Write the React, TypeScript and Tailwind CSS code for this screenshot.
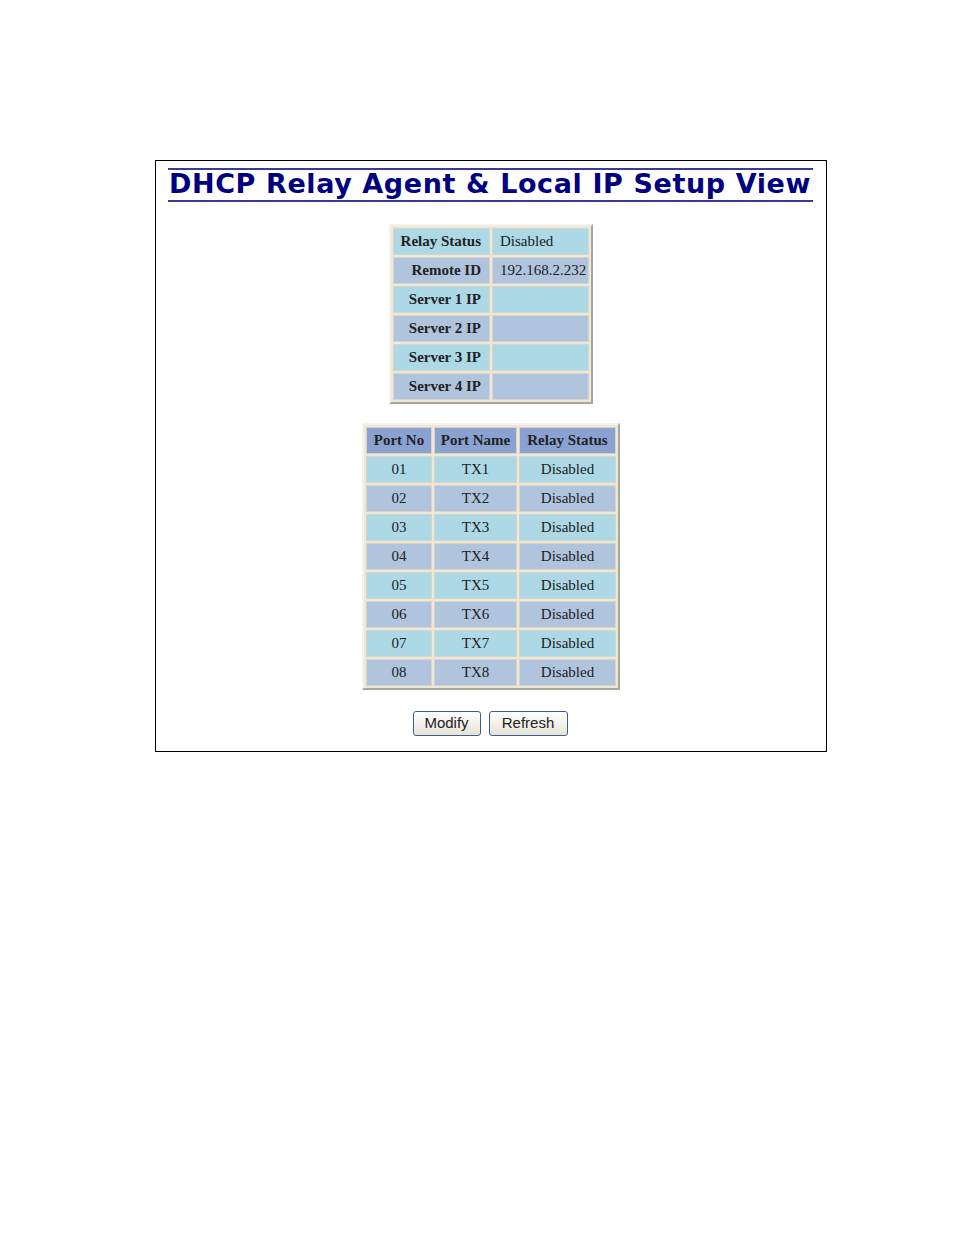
const relayRows = [
  { label: 'Relay Status', value: 'Disabled' },
  { label: 'Remote ID', value: '192.168.2.232' },
  { label: 'Server 1 IP', value: '' },
  { label: 'Server 2 IP', value: '' },
  { label: 'Server 3 IP', value: '' },
  { label: 'Server 4 IP', value: '' },
];

const ports = ['01', '02', '03', '04', '05', '06', '07', '08'];

const rowBg = (i: number) => (i % 2 === 0 ? 'bg-[#add8e6]' : 'bg-[#b0c4de]');

function Btn({ children, w }: { children: React.ReactNode; w: string }) {
  return (
    <button
      type="button"
      className={`${w} h-[25px] rounded-[3px] border border-[#3c5f8a] bg-gradient-to-b from-white to-[#e6e3d6] font-['Liberation_Sans',sans-serif] text-[15px] text-[#222]`}
    >
      {children}
    </button>
  );
}

export default function App() {
  return (
    <div className="min-h-[1235px] w-[954px] bg-white pt-[160px] font-['Liberation_Serif',serif]">
      <div className="ml-[155px] flex h-[592px] w-[672px] flex-col items-center border border-black pt-[7px]">
        <div className="mr-[2px] w-[645px] border-t-2 border-b-2 border-[#3a3a9a] pt-[1px] text-center">
          <span className="font-['DejaVu_Sans',sans-serif] text-[27px] font-bold leading-[26px] tracking-[0.6px] text-[#000080]">
            DHCP Relay Agent &amp; Local IP Setup View
          </span>
        </div>

        <table className="mt-[22px] border-separate border-spacing-[2px] border-2 border-t-[#f4f2ea] border-l-[#f4f2ea] border-b-[#a9a69a] border-r-[#a9a69a] bg-[#ece9d8] text-[15px] text-[#222]">
          <tbody>
            {relayRows.map((r, i) => (
              <tr key={r.label} className={rowBg(i)}>
                <td className="h-[27px] w-[97px] border border-[#d8d5c8] pr-[8px] text-right font-bold">{r.label}</td>
                <td className="h-[27px] w-[97px] border border-[#d8d5c8] pl-[7px] text-left">{r.value}</td>
              </tr>
            ))}
          </tbody>
        </table>

        <table className="mt-[19px] border-separate border-spacing-[2px] border-2 border-t-[#f4f2ea] border-l-[#f4f2ea] border-b-[#a9a69a] border-r-[#a9a69a] bg-[#ece9d8] text-center text-[15px] text-[#222]">
          <thead>
            <tr className="bg-[#8aa2d2]">
              <th className="h-[27px] w-[66px] border border-[#d8d5c8] font-bold">Port No</th>
              <th className="h-[27px] w-[83px] border border-[#d8d5c8] font-bold">Port Name</th>
              <th className="h-[27px] w-[97px] border border-[#d8d5c8] font-bold">Relay Status</th>
            </tr>
          </thead>
          <tbody>
            {ports.map((p, i) => (
              <tr key={p} className={rowBg(i)}>
                <td className="h-[27px] border border-[#d8d5c8]">{p}</td>
                <td className="h-[27px] border border-[#d8d5c8]">TX{i + 1}</td>
                <td className="h-[27px] border border-[#d8d5c8]">Disabled</td>
              </tr>
            ))}
          </tbody>
        </table>

        <div className="mr-[2px] mt-[21px] flex gap-[8px]">
          <Btn w="w-[68px]">Modify</Btn>
          <Btn w="w-[79px]">Refresh</Btn>
        </div>
      </div>
    </div>
  );
}
